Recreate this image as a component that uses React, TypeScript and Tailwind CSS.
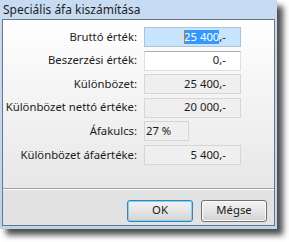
import type { ReactNode } from 'react';

const font = { fontFamily: '"Noto Sans", "Open Sans", sans-serif' };

function Row({ label, children }: { label: string; children: ReactNode }) {
  return (
    <div className="flex h-[20px] items-center">
      <div className="w-[135px] whitespace-nowrap pr-[1px] text-right">{label}</div>
      <div className="ml-[6px] flex h-full">{children}</div>
    </div>
  );
}

function ReadOnly({ value }: { value: string }) {
  return (
    <div className="flex h-full w-[97px] items-center justify-end border border-[#d6d6d6] bg-[#efefef] pr-[14px]">
      {value}
    </div>
  );
}

export default function App() {
  return (
    <div className="relative h-[242px] w-[289px] bg-white text-[11.3px] text-[#1b1b1b]" style={font}>
      <div className="flex h-[229px] w-[277px] flex-col bg-gradient-to-b from-[#c7dcf3] to-[#bcd4ee] shadow-[6px_6px_6px_rgba(0,0,0,0.7)]">
        <div className="flex h-[19px] items-center pl-[3px] text-[12px] text-[#1e1e1e]">Speciális áfa kiszámítása</div>

        <div className="mx-[2px] flex h-[207px] flex-col border border-[#6a7684]">
          <div className="flex flex-1 flex-col gap-[3.6px] bg-gradient-to-b from-white to-[#e7e7e7] pt-[7px]">
            <Row label="Bruttó érték:">
              <div className="flex h-full w-[97px] items-center justify-end border border-[#a9c3da] bg-[#c9e5fb] pr-[14px]">
                <span className="relative bg-[#3399ff] leading-[14px] text-white">
                  <span className="absolute left-0 top-0 h-full w-[1px] bg-[#e4761c]" />
                  25 400
                </span>
                <span>,-</span>
              </div>
            </Row>
            <Row label="Beszerzési érték:">
              <div className="flex h-full w-[97px] items-center justify-end border border-[#dbdfe6] border-t-[#abadb3] bg-white pr-[14px]">
                0,-
              </div>
            </Row>
            <Row label="Különbözet:">
              <ReadOnly value="25 400,-" />
            </Row>
            <Row label="Különbözet nettó értéke:">
              <ReadOnly value="20 000,-" />
            </Row>
            <Row label="Áfakulcs:">
              <div className="flex h-full w-[45px] items-center border border-[#d6d6d6] bg-[#efefef] pl-[1px]">
                27 %
              </div>
            </Row>
            <Row label="Különbözet áfaértéke:">
              <ReadOnly value="5 400,-" />
            </Row>
            <div className="h-[19px]" />
          </div>

          <div className="h-[1px] bg-[#a0a0a0]" />
          <div className="flex h-[38px] items-start justify-end gap-[8px] border-t border-white bg-[#e2e2e2] pr-[7px] pt-[10px]">
            <button className="flex h-[22px] w-[66px] items-center justify-center rounded-[3px] border border-[#3c7fb1] bg-gradient-to-b from-[#f2f2f2] via-[#e6e6e6] to-[#d2d2d2] shadow-[inset_0_0_0_1px_#7cd3f7]">
              OK
            </button>
            <button className="flex h-[22px] w-[66px] items-center justify-center rounded-[3px] border border-[#707070] bg-gradient-to-b from-[#f2f2f2] via-[#e6e6e6] to-[#d0d0d0] shadow-[inset_0_0_0_1px_#fbfbfb]">
              Mégse
            </button>
          </div>
        </div>
      </div>
    </div>
  );
}
